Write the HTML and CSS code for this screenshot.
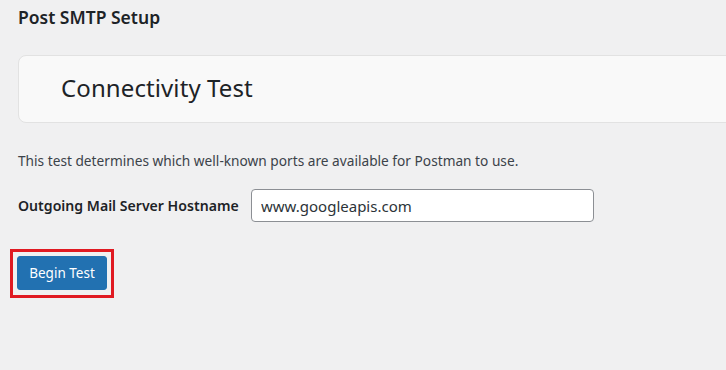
FILE: index.html
```html
<!DOCTYPE html>
<html>
<head>
<meta charset="utf-8">
<link rel="stylesheet" href="styles.css">
</head>
<body>
<div class="wrap">
  <h1 class="page-title">Post SMTP Setup</h1>
  <div class="card">
    <h2 class="card-title">Connectivity Test</h2>
  </div>
  <p class="desc">This test determines which well-known ports are available for Postman to use.</p>
  <div class="field">
    <label class="field-label">Outgoing Mail Server Hostname</label>
    <input class="field-input" type="text" value="www.googleapis.com">
  </div>
  <div class="actions">
    <div class="highlight">
      <button class="btn-primary">Begin Test</button>
    </div>
  </div>
</div>
</body>
</html>
```
FILE: styles.css
```css
html, body {
  margin: 0;
  padding: 0;
  background: #f0f0f1;
  font-family: "Noto Sans", "Open Sans", sans-serif;
  color: #1d2327;
  width: 726px;
  height: 370px;
  overflow: hidden;
}
.wrap {
  padding: 5px 0 0 18px;
}
.page-title {
  margin: 0;
  font-size: 17.5px;
  font-weight: 600;
  line-height: 24px;
  color: #1d2327;
}
.card {
  margin-top: 26px;
  margin-right: -20px;
  height: 66px;
  background: #f9f9f9;
  border: 1px solid #e2e2e2;
  border-radius: 8px;
  display: flex;
  align-items: center;
  padding-left: 42px;
  box-sizing: content-box;
}
.card-title {
  margin: 0 0 4px 0;
  font-size: 24px;
  font-weight: 400;
  color: #1d2327;
  letter-spacing: 0.1px;
}
.desc {
  margin: 28px 0 0 0;
  font-size: 13.7px;
  line-height: 20px;
  color: #3c434a;
}
.field {
  margin-top: 18px;
  display: flex;
  align-items: center;
  gap: 12px;
}
.field-label {
  font-size: 14.1px;
  font-weight: 600;
  color: #1d2327;
  width: 221px;
  white-space: nowrap;
}
.field-input {
  width: 343px;
  height: 33px;
  box-sizing: border-box;
  border: 1px solid #8c8f94;
  border-radius: 4px;
  background: #fff;
  padding: 0 9px;
  font-family: inherit;
  font-size: 15px;
  color: #2c3338;
}
.actions {
  margin-top: 27px;
  margin-left: -8px;
}
.highlight {
  display: inline-block;
  border: 3px solid #e01a22;
  padding: 4px 4px 5px 4px;
}
.btn-primary {
  display: block;
  width: 90px;
  height: 34px;
  background: #2271b1;
  border: 1px solid #2271b1;
  border-radius: 3px;
  color: #fff;
  font-family: inherit;
  font-size: 13.5px;
  padding: 0;
}
```
